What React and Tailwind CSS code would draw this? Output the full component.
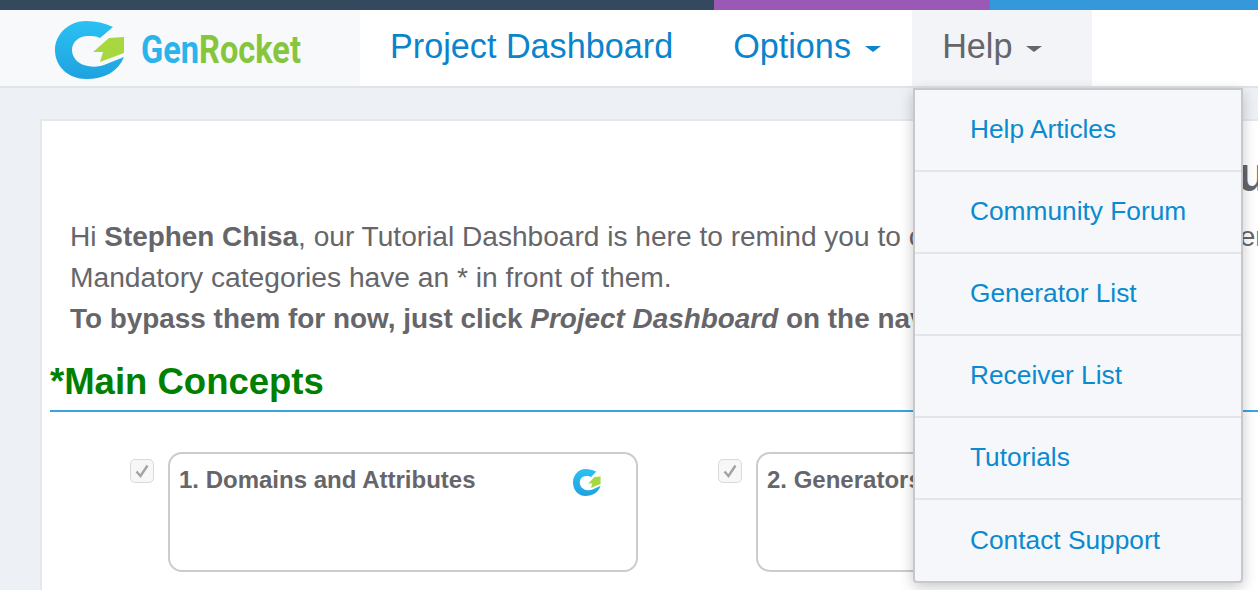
import React from "react";

const font = { fontFamily: '"Liberation Sans", Arial, sans-serif' };

const Logo = ({ className, id, stretch }) => (
  <svg className={className} viewBox="55 21 70 58" preserveAspectRatio={stretch ? "none" : "xMidYMid meet"}>
    <defs>
      <linearGradient id={id} x1="0" y1="0" x2="0" y2="1">
        <stop offset="0" stopColor="#2bc1f3" />
        <stop offset="1" stopColor="#1fa2df" />
      </linearGradient>
    </defs>
    <path
      d="M113 27C105 23 96 21 86 21C69 21 55 34 55 50C55 67 69 79 86 79C104 79 118 72 124 57L104 65C98 67 93 67 88 66C79 65 72 58 72 50C72 42 79 36 88 36C92 36 96 36 100 38Z"
      fill={`url(#${id})`}
    />
    <path d="M109 38L124 37L124 53L100 62L103 52L93 52Z" fill="#a8d83f" />
  </svg>
);

const Caret = ({ className }) => (
  <span className={`inline-block w-0 h-0 border-x-[8px] border-x-transparent border-t-[6px] ${className}`} />
);

const helpItems = ["Help Articles", "Community Forum", "Generator List", "Receiver List", "Tutorials", "Contact Support"];

const Concept = ({ title, logo }) => (
  <div className="flex items-start gap-[14px] w-[508px] shrink-0">
    <div className="mt-[7px] w-[24px] h-[24px] rounded-[5px] border border-[#d9d9d9] bg-[#f7f7f7] flex items-center justify-center shrink-0">
      <svg width="16" height="16" viewBox="0 0 16 16" fill="none" stroke="#a3a3a3" strokeWidth="2.4">
        <path d="M2.5 8.5L6.5 13L13.5 2.5" />
      </svg>
    </div>
    <div className="w-[470px] h-[120px] rounded-[14px] border-2 border-[#cccccc] px-[9px] py-[10px] flex justify-between shrink-0">
      <span className="text-[24px] leading-[32px] font-bold text-[#66666a]">{title}</span>
      {logo && <Logo id="logo-small" stretch className="w-[28px] h-[27px] mt-[5px] mr-[26px]" />}
    </div>
  </div>
);

export default function App() {
  return (
    <div className="relative w-[1258px] h-[590px] overflow-hidden bg-[#edf0f5]" style={font}>
      {/* top colour strip */}
      <div className="flex h-[10px]">
        <div className="w-[714px] bg-[#34495e]" />
        <div className="w-[276px] bg-[#9b59b6]" />
        <div className="flex-1 bg-[#3498db]" />
      </div>

      {/* navbar */}
      <div className="flex h-[78px] bg-white border-b-2 border-[#e1e3e8]">
        <div className="w-[360px] bg-[#f8f9fb] flex items-center pl-[55px] pt-[4px] gap-[16px]">
          <Logo id="logo-big" className="w-[70px] h-[58px] shrink-0" />
          <span className="text-[39px] font-bold whitespace-nowrap origin-left scale-x-[0.835]" style={{ fontFamily: "Roboto, sans-serif" }}>
            <span className="text-[#2bb4ec]">Gen</span>
            <span className="text-[#85c63c]">Rocket</span>
          </span>
        </div>
        <div className="flex items-center pl-[30px] pr-[60px] pb-[2px] text-[34.2px] text-[#0c84cc]">Project Dashboard</div>
        <div className="flex items-center gap-[14px] w-[179px] pb-[2px] text-[34.2px] text-[#0c84cc]">
          Options <Caret className="border-t-[#0c84cc] mt-[3px]" />
        </div>
        <div className="flex items-center gap-[14px] w-[180px] pl-[30px] pb-[2px] bg-[#f3f4f8] text-[34.2px] text-[#66666a]">
          Help <Caret className="border-t-[#66666a] mt-[3px]" />
        </div>
      </div>

      {/* tutorial card */}
      <div className="mt-[31px] ml-[40px] w-[1400px] h-[600px] bg-white border-2 border-[#e6e7ea] pl-[8px]">
        <div className="h-[95px] pl-[1162px] pt-[29px] text-[48px] leading-[50px] font-bold text-[#66666a] whitespace-nowrap">Tutorial</div>
        <div className="pl-[20px] text-[28.2px] leading-[41px] text-[#66666a] whitespace-nowrap">
          <p className="text-[28.1px]">
            Hi <b className="text-[27.9px]">Stephen Chisa</b>, our Tutorial Dashboard is here to remind you to complete the tutorial in order
          </p>
          <p>Mandatory categories have an * in front of them.</p>
          <p className="text-[27.9px]">
            <b>
              To bypass them for now, just click <i>Project Dashboard</i> on the navigation bar.
            </b>
          </p>
        </div>
        <h2 className="mt-[21px] pb-[6px] text-[36.5px] leading-[44px] font-bold text-[#008000] border-b-2 border-[#38a5e2]">*Main Concepts</h2>
        <div className="flex gap-[80px] mt-[40px] pl-[80px]">
          <Concept title="1. Domains and Attributes" logo />
          <Concept title="2. Generators" />
        </div>
      </div>

      {/* help dropdown */}
      <div className="absolute left-[913px] top-[88px] w-[330px] h-[495px] bg-[#f6f7fa] border-2 border-[#c6c8cc] rounded-b-[4px] shadow-[0_4px_14px_rgba(0,0,0,0.22)]">
        {helpItems.map((item, i) => (
          <div
            key={item}
            className={`h-[82px] pl-[55px] flex items-center text-[26.3px] text-[#0a8ad0] ${i < 5 ? "border-b-2 border-[#e3e5e9]" : ""}`}
          >
            {item}
          </div>
        ))}
      </div>
    </div>
  );
}
